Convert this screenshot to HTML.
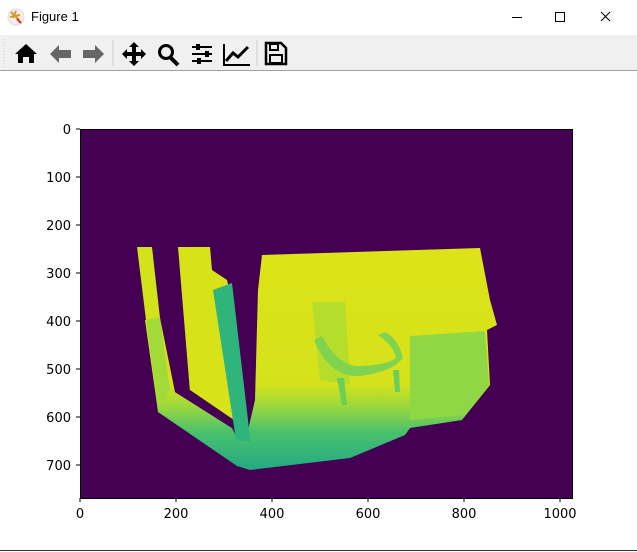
<!DOCTYPE html>
<html><head><style>
body{margin:0;width:637px;height:552px;background:#fff;overflow:hidden;font-family:"DejaVu Sans","Liberation Sans",sans-serif;position:relative}
.t{position:absolute;left:31px;top:9px;font:13px "Liberation Sans",sans-serif;color:#000}
.tb{position:absolute;left:0;top:35px;width:637px;height:35px;background:#f0f0f0;border-bottom:1px solid #a0a0a0}
</style></head><body>
<svg style="position:absolute;left:7px;top:8px" width="18" height="18" viewBox="0 0 18 18"><circle cx="9" cy="9" r="8" fill="#f4efe8" stroke="#ddd"/><path d="M4 4 L12 12 M9 3 L6 10 M3 9 L13 7" stroke="#d49a2a" stroke-width="2"/><path d="M10 11 L14 15" stroke="#c33" stroke-width="2"/></svg>
<div class="t">Figure 1</div>
<svg style="position:absolute;left:500px;top:8px" width="130" height="18"><path d="M12 9.5h10" stroke="#000"/><rect x="55.5" y="4.5" width="9" height="9" fill="none" stroke="#000"/><path d="M101 4l9 9M110 4l-9 9" stroke="#000"/></svg>
<div class="tb"></div>
<svg style="position:absolute;left:0;top:35px" width="300" height="35">
<path d="M4 4v28" stroke="#ccc" stroke-dasharray="1 2"/>
<path d="M15 19 L26 9 L37 19 L34 19 L34 28 L29 28 L29 22 L23 22 L23 28 L18 28 L18 19Z" fill="#000"/>
<path d="M50 19 L59 10 L59 15 L71 15 L71 23 L59 23 L59 28Z" fill="#666"/>
<path d="M104 19 L95 10 L95 15 L83 15 L83 23 L95 23 L95 28Z" fill="#666"/>
<path d="M113 5v26" stroke="#ccc"/>
<path d="M134 7 L139 12 L136 12 L136 17 L141 17 L141 14 L146 19 L141 24 L141 21 L136 21 L136 26 L139 26 L134 31 L129 26 L132 26 L132 21 L127 21 L127 24 L122 19 L127 14 L127 17 L132 17 L132 12 L129 12Z" fill="#000"/>
<circle cx="166" cy="17" r="6.5" fill="none" stroke="#000" stroke-width="3"/><path d="M170 22 L178 30" stroke="#000" stroke-width="4"/>
<path d="M192 12h20M192 19h20M192 26h20" stroke="#000" stroke-width="2"/><rect x="196" y="9" width="4" height="6" fill="#000"/><rect x="205" y="16" width="4" height="6" fill="#000"/><rect x="197" y="23" width="4" height="6" fill="#000"/>
<path d="M224 9v21h26" stroke="#000" stroke-width="2" fill="none"/><path d="M226 26 L233 18 L238 22 L248 12" stroke="#000" stroke-width="3" fill="none"/>
<path d="M257 5v26" stroke="#ccc"/>
<path d="M266 8h15l5 5v16h-20z" fill="none" stroke="#000" stroke-width="2.5"/><rect x="270" y="9" width="8" height="6" fill="none" stroke="#000" stroke-width="2"/><rect x="270" y="20" width="12" height="8" fill="none" stroke="#000" stroke-width="2"/>
</svg>
<svg style="position:absolute;left:0;top:0" width="637" height="552">
<defs><linearGradient id="g" x1="0" y1="250" x2="0" y2="472" gradientUnits="userSpaceOnUse">
<stop offset="0" stop-color="#dde318"/><stop offset="0.6" stop-color="#d5e21a"/><stop offset="0.7" stop-color="#9dd93b"/><stop offset="0.82" stop-color="#4ac16d"/><stop offset="1" stop-color="#22a884"/></linearGradient></defs>
<rect x="80" y="129" width="492" height="369" fill="#440154"/>
<path d="M262,255 L480,248 L490,300 L497,325 L487,330 L490,385 L462,420 L410,428 L405,435 L350,458 L250,470 L237,466 L158,412 L145,320 L160,318 L175,392 L232,428 L238,440 L248,430 L255,400 L258,290Z" fill="url(#g)"/>
<path d="M137,247 L152,247 L160,318 L146,320Z" fill="#d2e21b"/>
<path d="M146,320 L160,318 L170,390 L158,410Z" fill="#a2da37"/>
<path d="M178,247 L210,247 L212,270 L227,280 L232,300 L236,422 L190,392Z" fill="#d8e219"/>
<path d="M175,392 L232,428 L234,420 L190,390Z" fill="#440154"/>
<path d="M213,290 L232,283 L248,420 L250,442 L236,440Z" fill="#2fb47c"/>
<path d="M410,336 L485,331 L489,385 L465,415 L410,420Z" fill="#8fd744"/>
<path d="M312,302 L345,302 L350,385 L320,380Z" fill="#b5dd2b"/>
<path d="M314,340 Q330,378 360,376 Q392,372 403,358 Q398,338 385,332 L378,335 Q394,346 396,358 Q385,366 355,366 Q335,362 322,336Z" fill="#7fd34e"/>
<path d="M337,378 L342,405 L347,405 L344,378Z M393,370 L395,392 L400,392 L399,370Z" fill="#6ccd5a"/>
<g stroke="#000" fill="none"><rect x="80.5" y="129.5" width="492" height="369"/>
<path d="M80 498v4M176 498v4M272 498v4M368 498v4M464 498v4M560 498v4M80 129h-4M80 177h-4M80 225h-4M80 273h-4M80 321h-4M80 369h-4M80 417h-4M80 465h-4"/></g>
<g font-size="13" fill="#000" text-anchor="end" font-family="DejaVu Sans,sans-serif">
<text x="71" y="134">0</text><text x="71" y="182">100</text><text x="71" y="230">200</text><text x="71" y="278">300</text><text x="71" y="326">400</text><text x="71" y="374">500</text><text x="71" y="422">600</text><text x="71" y="470">700</text></g>
<g font-size="13" fill="#000" text-anchor="middle" font-family="DejaVu Sans,sans-serif">
<text x="80" y="518">0</text><text x="176" y="518">200</text><text x="272" y="518">400</text><text x="368" y="518">600</text><text x="464" y="518">800</text><text x="560" y="518">1000</text></g>
<path d="M0 550.5h637" stroke="#333"/>
</svg>
</body></html>
